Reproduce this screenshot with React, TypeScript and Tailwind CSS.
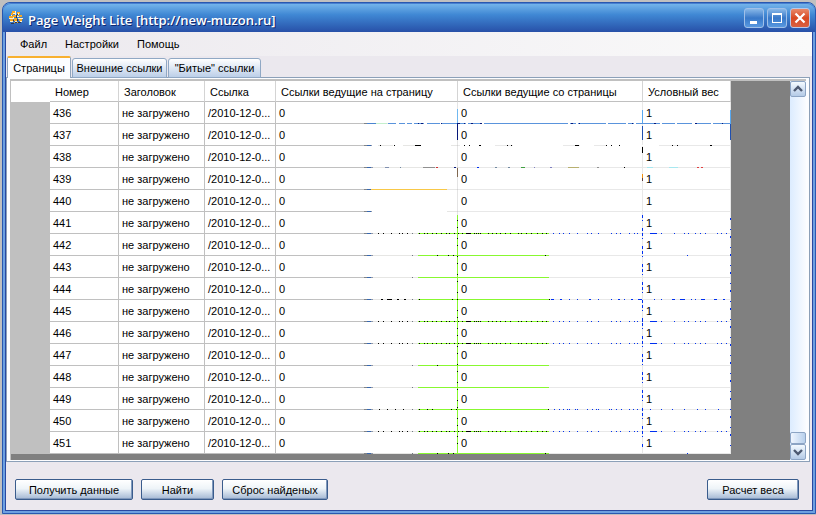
import { ReactNode } from "react";

const columns = [
  { title: "Номер", width: "w-[69px]" },
  { title: "Заголовок", width: "w-[86px]" },
  { title: "Ссылка", width: "w-[71px]" },
  { title: "Ссылки ведущие на страницу", width: "w-[182px]" },
  { title: "Ссылки ведущие со страницы", width: "w-[185px]" },
  { title: "Условный вес", width: "w-[88px]" },
];

const rows = Array.from({ length: 16 }, (_, i) => [
  String(436 + i),
  "не загружено",
  "/2010-12-0...",
  "0",
  "0",
  "1",
]);

const BLACK = "#000000";
const BLUE = "#0030f0";
const NAVY = "#06187a";

type Mark = [x: number, width: number, color: string];

const dots = (color: string, xs: number[]): Mark[] => xs.map((x) => [x, 1, color]);

const denseMarks: Mark[] = [
  ...dots(BLACK, [378, 383, 391, 399, 402, 407, 419, 424, 427, 432, 436, 441, 446, 449, 454, 458, 462, 474, 476, 478, 480, 488, 492, 496, 500, 505, 510, 518, 521, 526, 531, 537, 542, 546]),
  [466, 5, BLACK],
  ...dots(BLUE, [553, 559, 563, 569, 577, 587, 591, 598, 611, 616, 620, 629, 634, 637, 642, 661, 674, 684, 688, 695, 700, 705, 717, 721, 726]),
  [650, 7, BLUE],
];

const fewMarks: Mark[] = [...dots(BLACK, [437, 448, 453, 545]), [687, 1, BLUE]];

const mediumMarks: Mark[] = [
  [381, 2, BLACK], [387, 5, BLACK], [397, 2, BLACK], [404, 2, BLACK],
  ...dots(BLACK, [419, 452, 457, 549]),
  [551, 3, BLUE], [560, 2, BLUE], [589, 2, BLUE], [618, 2, BLUE], [631, 2, BLUE], [638, 4, BLUE],
  ...dots(BLUE, [569, 577, 598, 611, 624, 654, 661, 691, 695]),
  [672, 3, BLUE], [680, 5, BLUE], [701, 4, BLUE], [714, 3, BLUE], [723, 2, BLUE],
];

const marksByRow: Mark[][] = [
  [
    [367, 9, "#4a84d0"], [376, 11, "#c4f0cc"], [388, 69, "#5a94dc"], [458, 272, "#5a94dc"],
    [396, 3, "#ffffff"], [405, 2, "#ffffff"], [412, 2, "#ffffff"], [424, 3, "#ffffff"], [440, 2, "#ffffff"],
    [466, 2, "#ffffff"], [482, 2, "#ffffff"], [568, 2, "#ffffff"], [576, 2, "#ffffff"], [606, 2, "#ffffff"], [626, 2, "#ffffff"], [634, 2, "#ffffff"],
    [660, 2, "#ffffff"], [675, 2, "#ffffff"], [692, 3, "#ffffff"], [711, 2, "#ffffff"],
    [418, 1, NAVY], [421, 2, NAVY], [441, 1, NAVY], [457, 3, NAVY], [464, 1, NAVY], [471, 2, NAVY], [480, 2, NAVY], [571, 2, NAVY], [579, 1, NAVY], [632, 1, NAVY], [654, 2, NAVY], [695, 2, NAVY], [722, 1, NAVY],
  ],
  [
    [372, 6, "#ffffff"], [393, 10, "#ffffff"], [421, 30, "#ffffff"], [460, 35, "#ffffff"], [513, 50, "#ffffff"], [580, 14, "#ffffff"], [606, 53, "#ffffff"],
    ...dots(BLACK, [380, 394, 464, 469, 507, 511, 606, 611, 619, 672, 677]),
    [415, 6, BLACK], [479, 2, BLACK], [575, 4, BLACK], [710, 2, BLACK],
  ],
  [
    [385, 4, "#8090b0"], [400, 1, "#7088a0"], [423, 12, "#909090"], [436, 2, "#d03030"], [454, 2, NAVY],
    [477, 2, BLUE], [495, 2, "#7088a0"], [508, 2, "#7088a0"], [521, 4, "#40a040"], [534, 1, "#8080c0"], [550, 2, "#8080c0"], [568, 11, "#b8b070"], [597, 2, "#909090"], [624, 1, BLACK],
    [647, 6, "#a8e8f0"], [669, 9, "#a8e8f0"], [697, 2, "#e04040"], [701, 2, "#e04040"],
  ],
  [[371, 76, "#f8c848"]],
  [[372, 75, "#ffffff"]],
  denseMarks,
  fewMarks,
  [],
  mediumMarks,
  denseMarks,
  denseMarks,
  [[437, 1, BLACK]],
  [],
  [...dots(BLACK, [379, 387, 395, 403, 419, 427, 432, 451, 456, 548]), ...dots(BLUE, [554, 559, 563, 567, 569, 575, 577, 587, 592, 596, 598, 609, 611, 616, 621, 629, 633, 637, 650, 661, 672, 684, 697, 705, 718])],
  denseMarks,
  fewMarks,
];

/** Desktop pixels that show through the keyed-out grid lines. */
function GridLines() {
  return (
    <svg
      aria-hidden="true"
      className="pointer-events-none absolute top-0 left-0"
      width="720"
      height="373"
      viewBox="11 81 720 373"
      shapeRendering="crispEdges"
    >
      <rect x="457" y="109" width="1" height="14" fill="#70b8f0" />
      <rect x="457" y="123" width="1" height="17" fill={NAVY} />
      <rect x="457" y="168" width="1" height="9" fill="#806850" />
      <rect x="457" y="215" width="1" height="239" fill="#88f830" />
      <rect x="642" y="110" width="1" height="14" fill="#58a8f0" />
      <rect x="642" y="126" width="1" height="14" fill="#2050b0" />
      <rect x="642" y="147" width="1" height="6" fill={BLACK} />
      <rect x="642" y="174" width="1" height="4" fill="#f09010" />
      <rect x="642" y="178" width="1" height="3" fill="#604040" />
      <rect x="730" y="110" width="1" height="14" fill="#58a8f0" />
      <rect x="730" y="124" width="1" height="16" fill="#2050b0" />
      {marksByRow.map((marks, i) => {
        const y = 123 + i * 22;
        return (
          <g key={i}>
            <rect x="364" y={y} width="3" height="1" fill="#808488" />
            <rect x="367" y={y} width="4" height="1" fill="#3868b0" />
            <rect x="371" y={y} width="2" height="1" fill="#9098a8" />
            <rect x="373" y={y} width="84" height="1" fill="#e6e6e4" />
            {i > 4 && <rect x="412" y={y} width="1" height="1" fill="#707880" />}
            {i > 4 && <rect x="418" y={y} width="131" height="1" fill="#88f830" />}
            {marks.map(([x, width, color], j) => (
              <rect key={j} x={x} y={y} width={width} height="1" fill={color} />
            ))}
          </g>
        );
      })}
      {Array.from({ length: 13 }, (_, i) => {
        const y = 215 + i * 18;
        return (
          <g key={i}>
            <rect x="457" y={y + 5} width="1" height="1" fill={BLACK} />
            <rect x="457" y={y + 12} width="1" height="1" fill={BLACK} />
            <rect x="642" y={y} width="1" height="3" fill={BLUE} />
            <rect x="642" y={y + 5} width="1" height="1" fill={BLUE} />
            <rect x="642" y={y + 13} width="1" height="3" fill={BLUE} />
            <rect x="730" y={y + 3} width="1" height="2" fill={BLUE} />
            <rect x="730" y={y + 14} width="1" height="1" fill={BLUE} />
          </g>
        );
      })}
    </svg>
  );
}

function ScalesIcon() {
  return (
    <svg width="16" height="16" viewBox="0 0 16 16" shapeRendering="crispEdges" aria-hidden="true">
      <path fill="#f8a820" d="M4 1h3v2H4zM9 2h3v2H9zM3 3h2v2H3zM1 6h4v2H1zM5 5h5v2H5zM11 5h3v2h-3zM2 9h3v2H2zM6 8h3v3H6zM11 9h3v2h-3zM6 12h4v1H6z" />
      <path fill="#fff4d0" d="M7 1h1v4H7zM5 3h2v1H5zM10 3h1v2h-1zM1 8h5v1H1zM10 8h5v1h-5zM5 7h1v1H5zM9 6h2v1H9zM7 11h2v1H7zM2 11h3v1H2zM12 11h2v1h-2zM3 5h1v1H3z" />
      <path fill="#303848" d="M8 5h1v3H8zM9 9h1v2H9zM5 10h1v1H5zM7 12h2v1H7zM3 13h3v1H3zM10 12h3v1h-3zM9 4h1v1H9z" />
    </svg>
  );
}

function CaptionButton({ label, close, children }: { label: string; close?: boolean; children: ReactNode }) {
  return (
    <button
      type="button"
      aria-label={label}
      className={
        close
          ? "flex size-5 items-center justify-center rounded-[3px] border border-[#b8c8e8] bg-linear-to-b from-[#e88868] via-[#d84820] to-[#d86040]"
          : "flex size-5 items-center justify-center rounded-[3px] border border-[#a0c0e8] bg-linear-to-b from-[#88b8e8] via-[#3878c8] to-[#5898e0]"
      }
    >
      <svg width="14" height="14" viewBox="0 0 14 14" shapeRendering={close ? "auto" : "crispEdges"} fill="none" stroke="#ffffff">
        {children}
      </svg>
    </button>
  );
}

function PushButton({ width, children }: { width: string; children: ReactNode }) {
  return (
    <button
      type="button"
      className={`${width} h-[21px] rounded-[2px] border border-[#3a5c8c] bg-linear-to-b from-white via-[#eef4f8] via-45% to-[#a4b8d4] text-center leading-5 shadow-[inset_-1px_-1px_0_#8098bc]`}
    >
      {children}
    </button>
  );
}

function ScrollButton({ label, path }: { label: string; path: string }) {
  return (
    <button
      type="button"
      aria-label={label}
      className="flex h-4 w-4 shrink-0 items-center justify-center rounded-[2px] border border-[#8ca4c4] bg-linear-to-b from-[#f4faff] to-[#b4cae6]"
    >
      <svg width="10" height="8" viewBox="0 0 10 8" fill="none" stroke="#4c5870" strokeWidth="2.4">
        <path d={path} />
      </svg>
    </button>
  );
}

export default function App() {
  return (
    <div className="flex min-h-screen flex-col bg-[#c0c0c0] pt-0.5 pb-px pl-0.5 font-['Liberation_Sans',Arial,sans-serif] text-[11px] text-black">
      <div className="flex flex-1 flex-col rounded-t-lg border border-[#2858b0] bg-[#6ca0e0]">
        <header className="flex h-[29px] items-center rounded-t-lg bg-linear-to-b from-[#78b8ec] via-[#4088d4] via-40% to-[#2850a8] pr-[5px] pl-[5px] shadow-[inset_0_1px_0_#4880d0]">
          <ScalesIcon />
          <h1 className="mt-1 ml-1 flex-1 font-['Open_Sans','Noto_Sans',sans-serif] text-[13px] leading-5 font-semibold whitespace-nowrap text-white [text-shadow:1px_1px_0_#102870]">
            Page Weight Lite [http://new-muzon.ru]
          </h1>
          <div className="flex gap-[3px]">
            <CaptionButton label="Свернуть">
              <path d="M3 11.5h7" strokeWidth="3" />
            </CaptionButton>
            <CaptionButton label="Развернуть">
              <path d="M2.5 2.5h9v9h-9z" />
              <path d="M2 3h10" strokeWidth="2" />
            </CaptionButton>
            <CaptionButton label="Закрыть" close>
              <path d="M2.5 2.5l9 9m0-9l-9 9" strokeWidth="2.2" />
            </CaptionButton>
          </div>
        </header>

        <div className="mx-0.5 mb-0.5 flex flex-1 flex-col border border-t-0 border-[#2848a0] bg-[#ebe8ee]">
          <nav className="flex h-6 items-center gap-[18px] bg-linear-to-r from-[#ece9ee] to-[#fafafa] pl-3.5">
            <button type="button">Файл</button>
            <button type="button">Настройки</button>
            <button type="button">Помощь</button>
          </nav>

          <div role="tablist" className="relative z-10 -mb-px flex h-[22px] items-end gap-px pl-px">
            <button
              type="button"
              role="tab"
              aria-selected="true"
              className="h-[22px] w-16 rounded-t-[2px] border-x border-t-2 border-[#90a4bc] border-t-[#f8b030] bg-[#fcfdff] leading-4"
            >
              Страницы
            </button>
            <button
              type="button"
              role="tab"
              aria-selected="false"
              className="h-5 w-[95px] rounded-t-[3px] border border-[#90a8c4] bg-linear-to-b from-white to-[#bccfe8] leading-[18px]"
            >
              Внешние ссылки
            </button>
            <button
              type="button"
              role="tab"
              aria-selected="false"
              className="h-5 w-[93px] rounded-t-[3px] border border-[#90a8c4] bg-linear-to-b from-white to-[#bccfe8] leading-[18px]"
            >
              "Битые" ссылки
            </button>
          </div>

          <main className="mr-0.5 flex flex-1 flex-col border border-[#8ca0b8] bg-[#fcfdff] px-[3px] pt-px pb-px">
            <div className="flex flex-1 border-t-2 border-l border-[#c0c0c0]">
              <div className="min-w-0 flex-1 overflow-hidden bg-[#808080]">
                <div className="relative w-[720px]">
                  <table className="w-[720px] table-fixed border-separate border-spacing-0 text-left">
                    <thead>
                      <tr className="h-[21px] bg-white">
                        <td className="w-[39px] bg-white" />
                        {columns.map((c) => (
                          <th
                            key={c.title}
                            scope="col"
                            className={`${c.width} border-r border-b border-r-[#d4d4d4] border-b-[#c0c0c0] p-0 pt-0.5 pl-[5px] font-normal whitespace-nowrap`}
                          >
                            {c.title}
                          </th>
                        ))}
                      </tr>
                    </thead>
                    <tbody>
                      {rows.map((row) => (
                        <tr key={row[0]} className="h-[22px] bg-white">
                          <td className="bg-[#c0c0c0]" />
                          {row.map((cell, i) => (
                            <td
                              key={i}
                              className={
                                i < 3
                                  ? "border-r border-b border-[#c0c0c0] p-0 pt-0.5 pl-[3px] whitespace-nowrap"
                                  : i === 3
                                    ? "border-r border-b border-r-[#e4e4e4] border-b-[#c0c0c0] p-0 pt-0.5 pl-[3px] whitespace-nowrap"
                                    : "border-r border-b border-[#e8e8e8] p-0 pt-0.5 pl-[3px] whitespace-nowrap"
                              }
                            >
                              {cell}
                            </td>
                          ))}
                        </tr>
                      ))}
                    </tbody>
                  </table>
                  <GridLines />
                </div>
              </div>
              <div className="flex w-4 shrink-0 flex-col bg-linear-to-r from-[#dcecff] to-[#fafcff]">
                <ScrollButton label="Прокрутить вверх" path="M1 6l4-4 4 4" />
                <div className="flex-1" />
                <div className="h-3 rounded-[2px] border border-[#8ca4c4] bg-linear-to-r from-[#f0f6ff] to-[#b8d0ec]" />
                <ScrollButton label="Прокрутить вниз" path="M1 2l4 4 4-4" />
              </div>
            </div>
          </main>

          <footer className="flex h-12 items-end gap-2 pr-[13px] pb-2.5 pl-[9px]">
            <PushButton width="w-[118px]">Получить данные</PushButton>
            <PushButton width="w-[73px]">Найти</PushButton>
            <PushButton width="w-[106px]">Сброс найденых</PushButton>
            <div className="flex-1" />
            <PushButton width="w-[92px]">Расчет веса</PushButton>
          </footer>
        </div>
      </div>
    </div>
  );
}
